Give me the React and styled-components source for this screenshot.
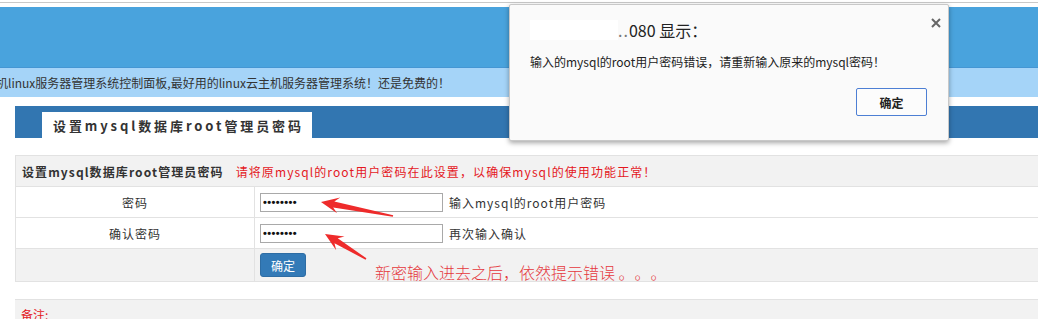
import React from 'react';
import styled, { createGlobalStyle } from 'styled-components';

const GlobalStyle = createGlobalStyle`
  html, body {
    margin: 0;
    padding: 0;
    background: #fff;
    overflow: hidden;
  }
  body {
    font-family: "Noto Sans CJK SC", "Noto Sans", sans-serif;
    font-size: 12px;
    color: #333;
    text-spacing-trim: space-all;
  }
`;

const Page = styled.div`
  position: relative;
  width: 1038px;
  height: 319px;
  overflow: hidden;
  padding-top: 2px;
  box-sizing: border-box;
`;

const TopRule = styled.div`
  height: 1px;
  background: #c9c9c9;
  margin-bottom: 4px;
`;

const Header = styled.div`
  height: 60px;
  background: #49a3dd;
`;

const Band = styled.div`
  height: 30px;
  background: #a5d4f8;
  border-top: 1px solid #4596d3;
  box-sizing: border-box;
  line-height: 29px;
  text-indent: -4px;
  white-space: nowrap;
  color: #333;
`;

const TabBar = styled.div`
  margin: 9px 0 0 15px;
  height: 32px;
  background: #3276b1;
  display: flex;
  align-items: flex-end;
  padding-left: 27px;
`;

const Tab = styled.div`
  height: 26px;
  background: #fff;
  padding: 0 8px 0 11px;
  font-size: 13px;
  font-weight: 700;
  letter-spacing: 2.9px;
  line-height: 28px;
  color: #333;
  white-space: nowrap;
`;

const Table = styled.div`
  margin: 17px 0 0 15px;
  border-top: 1px solid #e2e2e2;
  border-left: 1px solid #e2e2e2;
  width: 1100px;
`;

const Row = styled.div`
  display: grid;
  grid-template-columns: 239px 1fr;
  height: ${(p) => p.$h || 30}px;
  background: ${(p) => (p.$grey ? '#f2f2f2' : '#fff')};
  border-bottom: 1px solid #e2e2e2;
`;

const HeadRow = styled.div`
  display: flex;
  align-items: center;
  height: 30px;
  background: #f2f2f2;
  border-bottom: 1px solid #e2e2e2;
  padding-left: 6px;
  white-space: nowrap;
`;

const HeadTitle = styled.span`
  font-weight: 700;
  letter-spacing: 1.1px;
  color: #333;
  margin-right: 12px;
`;

const HeadHint = styled.span`
  color: #e4181e;
  letter-spacing: 1.1px;
`;

const LabelCell = styled.div`
  display: flex;
  align-items: center;
  justify-content: center;
  border-right: 1px solid #e2e2e2;
  letter-spacing: 1px;
`;

const FieldCell = styled.div`
  display: flex;
  align-items: center;
  padding-left: 5px;
  gap: 6px;
  white-space: nowrap;
`;

const PassInput = styled.input`
  width: 183px;
  height: 19px;
  box-sizing: border-box;
  border: 1px solid #a9a9a9;
  padding: 0 2px;
  font-family: "Liberation Sans", sans-serif;
  font-size: 11px;
  font-weight: 700;
  letter-spacing: 0.4px;
  color: #111;
  outline: none;
`;

const Hint = styled.span`
  letter-spacing: 1px;
  color: #333;
`;

const BlueButton = styled.button`
  width: 46px;
  height: 24px;
  background: #337ab7;
  border: 1px solid #2e6da4;
  border-radius: 3px;
  color: #fff;
  font-family: inherit;
  font-size: 12px;
  padding: 0;
`;

const NoteBox = styled.div`
  margin: 17px 0 0 15px;
  height: 40px;
  background: #f2f2f2;
  border-top: 1px solid #e2e2e2;
  padding: 6px 0 0 6px;
  color: #e4181e;
`;

const Dialog = styled.div`
  position: absolute;
  left: 509px;
  top: 4px;
  width: 440px;
  height: 137px;
  box-sizing: border-box;
  background: #fafafa;
  border: 1px solid #c8c8c8;
  border-radius: 2px;
  box-shadow: 0 2px 5px rgba(0, 0, 0, 0.35);
  padding: 14px 20px 0 20px;
`;

const DialogTitle = styled.div`
  display: flex;
  align-items: center;
  font-size: 16px;
  color: #222;
  height: 22px;
`;

const Mask = styled.span`
  display: inline-block;
  width: 88px;
  height: 20px;
  background: #fff;
`;

const Crumb = styled.span`
  color: #777;
  letter-spacing: 1px;
`;

const Close = styled.div`
  position: absolute;
  right: 7px;
  top: 9px;
  width: 10px;
  height: 10px;
`;

const Message = styled.div`
  margin-top: 12px;
  font-size: 12px;
  color: #222;
  white-space: nowrap;
`;

const DialogFooter = styled.div`
  display: flex;
  justify-content: flex-end;
  margin-top: 18px;
  padding-right: 1px;
`;

const OkButton = styled.button`
  width: 71px;
  height: 28px;
  background: #fcfcfc;
  border: 1px solid #4d7fd4;
  border-radius: 2px;
  font-family: inherit;
  font-weight: 700;
  font-size: 12px;
  color: #222;
  padding: 0;
`;

const Annotation = styled.div`
  position: absolute;
  left: 375px;
  top: 260px;
  font-size: 16px;
  color: #e5383d;
  white-space: nowrap;
  font-weight: 300;
`;

const Overlay = styled.svg`
  position: absolute;
  left: 0;
  top: 0;
  pointer-events: none;
`;

const arrowPoints = (tx, ty, px, py, headLen = 18, headW = 8, neckW = 3, tailW = 0.8) => {
  const dx = px - tx;
  const dy = py - ty;
  const len = Math.hypot(dx, dy);
  const ux = dx / len;
  const uy = dy / len;
  const nx = -uy;
  const ny = ux;
  const bx = px - ux * headLen;
  const by = py - uy * headLen;
  const kx = px - ux * (headLen - 5);
  const ky = py - uy * (headLen - 5);
  const pts = [
    [px, py],
    [bx + nx * headW, by + ny * headW],
    [kx + nx * neckW, ky + ny * neckW],
    [tx + nx * tailW, ty + ny * tailW],
    [tx - nx * tailW, ty - ny * tailW],
    [kx - nx * neckW, ky - ny * neckW],
    [bx - nx * headW, by - ny * headW],
  ];
  return pts.map((p) => p.map((v) => v.toFixed(1)).join(',')).join(' ');
};

const App = () => (
  <>
    <GlobalStyle />
    <Page>
      <TopRule />
      <Header />
      <Band>机linux服务器管理系统控制面板,最好用的linux云主机服务器管理系统！还是免费的！</Band>
      <TabBar>
        <Tab>设置mysql数据库root管理员密码</Tab>
      </TabBar>

      <Table>
        <HeadRow>
          <HeadTitle>设置mysql数据库root管理员密码</HeadTitle>
          <HeadHint>请将原mysql的root用户密码在此设置，以确保mysql的使用功能正常！</HeadHint>
        </HeadRow>
        <Row>
          <LabelCell>密码</LabelCell>
          <FieldCell>
            <PassInput type="text" readOnly value="••••••••" />
            <Hint>输入mysql的root用户密码</Hint>
          </FieldCell>
        </Row>
        <Row>
          <LabelCell>确认密码</LabelCell>
          <FieldCell>
            <PassInput type="text" readOnly value="••••••••" />
            <Hint>再次输入确认</Hint>
          </FieldCell>
        </Row>
        <Row $grey $h={32}>
          <LabelCell />
          <FieldCell>
            <BlueButton>确定</BlueButton>
          </FieldCell>
        </Row>
      </Table>

      <NoteBox>备注:</NoteBox>

      <Overlay width="1038" height="319">
        <polygon points={arrowPoints(393, 216, 321, 202, 18, 8, 3)} fill="#ee2b2b" />
        <polygon points={arrowPoints(366, 259, 325, 234, 18, 8, 3)} fill="#ee2b2b" />
      </Overlay>

      <Annotation>新密输入进去之后，依然提示错误 。。。</Annotation>

      <Dialog>
        <DialogTitle>
          <Mask />
          <Crumb>..</Crumb>080 显示：
        </DialogTitle>
        <Close>
          <svg width="10" height="10" viewBox="0 0 10 10">
            <path d="M1 1L9 9M9 1L1 9" stroke="#666" strokeWidth="2" />
          </svg>
        </Close>
        <Message>输入的mysql的root用户密码错误，请重新输入原来的mysql密码！</Message>
        <DialogFooter>
          <OkButton>确定</OkButton>
        </DialogFooter>
      </Dialog>
    </Page>
  </>
);

export default App;
